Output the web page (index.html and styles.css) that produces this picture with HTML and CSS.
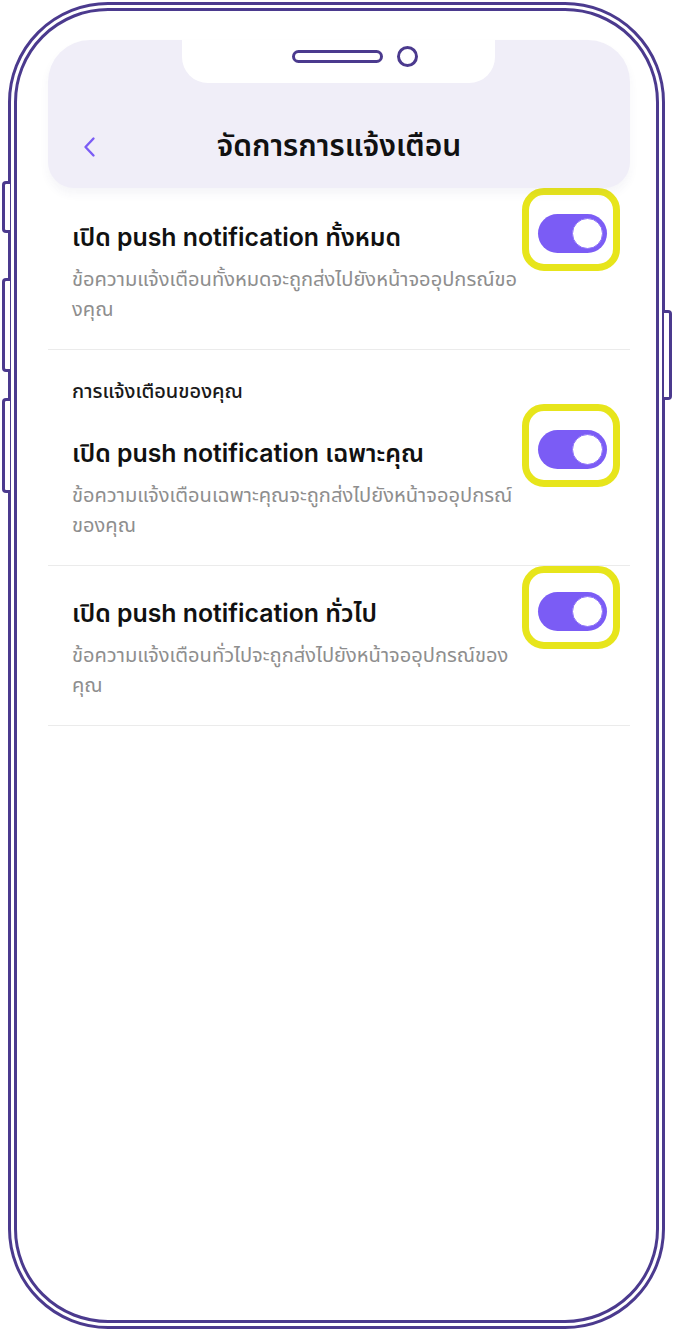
FILE: index.html
```html
<!DOCTYPE html>
<html lang="th">
<head>
<meta charset="utf-8">
<title>จัดการการแจ้งเตือน</title>
<link rel="stylesheet" href="styles.css">
</head>
<body>
<div class="device">
  <span class="side-btn side-l1"></span>
  <span class="side-btn side-l2"></span>
  <span class="side-btn side-l3"></span>
  <span class="side-btn side-r1"></span>
  <div class="phone">
    <div class="bezel">
      <div class="screen">
        <header class="header">
          <div class="notch">
            <span class="speaker"></span>
            <span class="camera"></span>
          </div>
          <div class="titlebar">
            <svg class="back" width="14" height="22" viewBox="0 0 14 22" aria-hidden="true">
              <path d="M11.5 2.5 L3.5 11 L11.5 19.5" fill="none" stroke="#7b5cf5" stroke-width="2.4" stroke-linecap="round" stroke-linejoin="round"/>
            </svg>
            <h1 class="title">จัดการการแจ้งเตือน</h1>
            <span></span>
          </div>
        </header>

        <section class="row row-first">
          <div class="text">
            <div class="row-title">เปิด push notification ทั้งหมด</div>
            <div class="row-desc">ข้อความแจ้งเตือนทั้งหมดจะถูกส่งไปยังหน้าจออุปกรณ์ขอ<br>งคุณ</div>
          </div>
          <div class="hl"><span class="toggle"><span class="knob"></span></span></div>
        </section>

        <div class="section-label">การแจ้งเตือนของคุณ</div>

        <section class="row row-second">
          <div class="text">
            <div class="row-title">เปิด push notification เฉพาะคุณ</div>
            <div class="row-desc">ข้อความแจ้งเตือนเฉพาะคุณจะถูกส่งไปยังหน้าจออุปกรณ์<br>ของคุณ</div>
          </div>
          <div class="hl"><span class="toggle"><span class="knob"></span></span></div>
        </section>

        <section class="row row-third">
          <div class="text">
            <div class="row-title">เปิด push notification ทั่วไป</div>
            <div class="row-desc">ข้อความแจ้งเตือนทั่วไปจะถูกส่งไปยังหน้าจออุปกรณ์ของ<br>คุณ</div>
          </div>
          <div class="hl"><span class="toggle"><span class="knob"></span></span></div>
        </section>
      </div>
    </div>
  </div>
</div>
</body>
</html>
```

FILE: styles.css
```css
* { box-sizing: border-box; }

html, body {
  margin: 0;
  padding: 0;
  background: #ffffff;
}

body {
  width: 677px;
  height: 1334px;
  overflow: hidden;
  font-family: "Inter", "Noto Sans Thai", "Noto Sans", sans-serif;
  color: #111111;
}

.device {
  position: relative;
  width: 677px;
  height: 1334px;
  padding: 2px 0 0 8px;
}

.phone {
  width: 657px;
  height: 1327px;
  border: 3px solid #4b3a8e;
  border-radius: 100px;
  padding: 3px;
  background: #ffffff;
}

.bezel {
  height: 100%;
  border: 3px solid #4b3a8e;
  border-radius: 94px;
  padding: 29px 26px 0 31px;
  background: #ffffff;
  overflow: hidden;
}

.side-btn {
  position: absolute;
  background: #ffffff;
  border: 3px solid #4b3a8e;
}

.side-l1, .side-l2, .side-l3 {
  left: 2px;
  width: 8px;
  border-right: none;
  border-radius: 4px 0 0 4px;
}
.side-l1 { top: 181px; height: 52px; }
.side-l2 { top: 278px; height: 94px; }
.side-l3 { top: 398px; height: 95px; }

.side-r1 {
  right: 5px;
  top: 310px;
  height: 90px;
  width: 8px;
  border-left: none;
  border-radius: 0 4px 4px 0;
}

.screen {
  width: 582px;
}

/* Header */
.header {
  height: 148px;
  background: #f0eef8;
  border-radius: 42px 42px 26px 26px;
  box-shadow: 0 6px 10px rgba(60, 50, 120, 0.05);
  display: flex;
  flex-direction: column;
  align-items: center;
  position: relative;
  z-index: 1;
}

.notch {
  width: 313px;
  height: 43px;
  background: #ffffff;
  border-radius: 0 0 26px 26px;
  display: flex;
  align-items: center;
  align-self: flex-start;
  margin-left: 134px;
  gap: 14px;
  padding: 6px 0 16px 110px;
}

.speaker {
  width: 91px;
  height: 13px;
  border: 3px solid #4b3a8e;
  border-radius: 7px;
}

.camera {
  width: 21px;
  height: 21px;
  border: 3px solid #4b3a8e;
  border-radius: 50%;
}

.titlebar {
  width: 100%;
  margin-top: 34px;
  height: 60px;
  display: grid;
  grid-template-columns: 1fr auto 1fr;
  align-items: center;
  padding-left: 34px;
}

.back { display: block; }

.title {
  margin: 0;
  font-size: 30px;
  font-weight: 600;
  color: #111111;
  transform: translateX(-17px);
}

/* Rows */
.row {
  display: flex;
  justify-content: space-between;
  align-items: flex-start;
  padding: 0 10px 25px 24px;
  border-bottom: 1px solid #ebebeb;
}

.text { padding-top: 33px; }
.row-third .text { padding-top: 31px; }

.row-title {
  font-size: 24.8px;
  line-height: 32px;
  font-weight: 600;
  color: #111111;
}

.row-desc {
  margin-top: 11px;
  font-size: 20.1px;
  line-height: 30px;
  color: #8e8e8e;
  white-space: nowrap;
}

.section-label {
  padding: 28px 0 0 24px;
  font-size: 20px;
  line-height: 26px;
  font-weight: 500;
  color: #1a1a1a;
}

.hl {
  width: 98px;
  height: 83px;
  border: 7px solid #e7e51b;
  border-radius: 22px;
  padding: 19px 6px 0 9px;
  flex-shrink: 0;
}

.toggle {
  display: flex;
  justify-content: flex-end;
  align-items: center;
  width: 69px;
  height: 39px;
  border-radius: 20px;
  background: #7b5cf5;
  padding: 4px;
}

.knob {
  width: 31px;
  height: 31px;
  border-radius: 50%;
  background: #ffffff;
  border: 1.5px solid #8f74f8;
}
```
